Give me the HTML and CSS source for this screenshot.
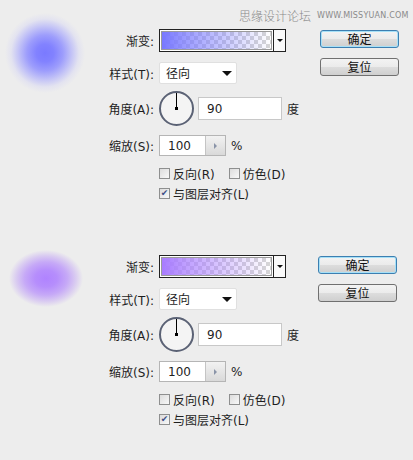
FILE: index.html
```html
<!DOCTYPE html>
<html lang="zh-CN">
<head>
    <meta charset="UTF-8">
    <meta name="viewport" content="width=device-width, initial-scale=1.0">
    <title>渐变叠加</title>
    <link rel="stylesheet" href="styles.css">
</head>
<body>

    <!-- 水印 -->
    <div class="watermark">
        <span class="wm-cn">思缘设计论坛</span>
        <span class="wm-en">WWW.MISSYUAN.COM</span>
    </div>

    <!-- 第一组：蓝色 -->
    <div class="panel">
        <div class="preview preview-blue"></div>
        <div class="form">
            <div class="row row-gradient">
                <span class="row-label">渐变:</span>
                <div class="gradient-bar">
                    <div class="gradient-swatch swatch-blue"></div>
                    <div class="gradient-drop"><span class="tri-small"></span></div>
                </div>
            </div>
            <div class="row row-style">
                <span class="row-label">样式(T):</span>
                <div class="select">径向<span class="tri"></span></div>
            </div>
            <div class="row row-angle">
                <span class="row-label">角度(A):</span>
                <div class="dial"><span class="dial-hand"></span><span class="dial-dot"></span></div>
                <div class="input input-angle">90</div>
                <span class="unit">度</span>
            </div>
            <div class="row row-scale">
                <span class="row-label">缩放(S):</span>
                <div class="input input-scale">100<span class="spin"><span class="tri-spin"></span></span></div>
                <span class="unit">%</span>
            </div>
            <div class="checks">
                <div class="check-line">
                    <span class="check"><span class="box"></span><span class="check-text">反向(R)</span></span>
                    <span class="check check-gap"><span class="box"></span><span class="check-text">仿色(D)</span></span>
                </div>
                <div class="check-line check-line-2">
                    <span class="check"><span class="box">&#10004;</span><span class="check-text">与图层对齐(L)</span></span>
                </div>
            </div>
        </div>
        <div class="buttons">
            <button class="btn btn-default">确定</button>
            <button class="btn">复位</button>
        </div>
    </div>

    <!-- 第二组：紫色 -->
    <div class="panel">
        <div class="preview preview-purple"></div>
        <div class="form">
            <div class="row row-gradient">
                <span class="row-label">渐变:</span>
                <div class="gradient-bar">
                    <div class="gradient-swatch swatch-purple"></div>
                    <div class="gradient-drop"><span class="tri-small"></span></div>
                </div>
            </div>
            <div class="row row-style">
                <span class="row-label">样式(T):</span>
                <div class="select">径向<span class="tri"></span></div>
            </div>
            <div class="row row-angle">
                <span class="row-label">角度(A):</span>
                <div class="dial"><span class="dial-hand"></span><span class="dial-dot"></span></div>
                <div class="input input-angle">90</div>
                <span class="unit">度</span>
            </div>
            <div class="row row-scale">
                <span class="row-label">缩放(S):</span>
                <div class="input input-scale">100<span class="spin"><span class="tri-spin"></span></span></div>
                <span class="unit">%</span>
            </div>
            <div class="checks">
                <div class="check-line">
                    <span class="check"><span class="box"></span><span class="check-text">反向(R)</span></span>
                    <span class="check check-gap"><span class="box"></span><span class="check-text">仿色(D)</span></span>
                </div>
                <div class="check-line check-line-2">
                    <span class="check"><span class="box">&#10004;</span><span class="check-text">与图层对齐(L)</span></span>
                </div>
            </div>
        </div>
        <div class="buttons buttons-2">
            <button class="btn btn-default">确定</button>
            <button class="btn">复位</button>
        </div>
    </div>

</body>
</html>
```

FILE: styles.css
```css
body {
    margin: 0;
    position: relative;
    background: #ededed;
    color: #1e1e1e;
    font-family: "DejaVu Sans", "Noto Sans CJK SC", sans-serif;
    font-size: 12px;
}

/* 水印 */
.watermark {
    position: absolute;
    top: 7px;
    left: 239px;
    display: flex;
    align-items: center;
    color: #8a8a8a;
}

.wm-cn {
    font-family: "Noto Sans CJK SC", sans-serif;
    font-size: 12px;
    font-weight: 300;
}

.wm-en {
    margin-left: 6px;
    font-size: 8px;
    letter-spacing: 0.2px;
}

.panel {
    display: flex;
    align-items: flex-start;
    height: 226px;
}

/* 预览 */
.preview {
    flex-shrink: 0;
    width: 80px;
    height: 80px;
    margin: 13px 0 0 5px;
}

.preview-blue {
    background: radial-gradient(circle closest-side at 50% 50%, #7a7aff 0%, #8282ff 22%, #9d9dfc 45%, #c6c6f6 68%, #e3e3f0 85%, rgba(237, 237, 237, 0) 100%);
}

.preview-purple {
    width: 74px;
    height: 62px;
    margin: 19px 2px 0 9px;
    background: radial-gradient(closest-side at 50% 54%, #b083ff 0%, #b68efc 30%, #c6a9f7 58%, #d9cbf1 80%, rgba(237, 237, 237, 0) 100%);
}

/* 表单 */
.form {
    flex-shrink: 0;
    margin: 29px 0 0 15px;
    width: 200px;
}

.row {
    display: flex;
    align-items: center;
}

.row-label {
    width: 54px;
    margin-right: 5px;
    flex-shrink: 0;
    text-align: right;
    white-space: nowrap;
}

.row-style { margin-top: 10px; }
.row-angle { margin-top: 7px; }
.row-scale { margin-top: 9px; }

/* 复选框 */
.checks {
    margin: 10px 0 0 59px;
}

.check-line {
    display: flex;
    align-items: center;
    height: 14px;
}

.check-line-2 {
    margin-top: 6px;
}

.check {
    display: flex;
    align-items: center;
    flex-shrink: 0;
    white-space: nowrap;
}

.check-gap {
    margin-left: 14px;
}

.box {
    display: block;
    flex-shrink: 0;
    width: 9px;
    height: 9px;
    margin-right: 3px;
    border: 1px solid #8e8f8f;
    background: linear-gradient(135deg, #dcdcdc, #f8f8f8);
    font-size: 9px;
    line-height: 9px;
    text-align: center;
    color: #3d4f86;
    overflow: hidden;
}

/* 渐变条 */
.gradient-bar {
    display: flex;
    width: 125px;
    height: 21px;
    border: 1px solid #222;
    background: #fff;
}

.gradient-swatch {
    flex: 1;
    margin: 1px;
    border: 1px solid #9a9a9a;
    background-color: #fff;
    background-image:
        linear-gradient(45deg, #d6d6d6 25%, transparent 25%, transparent 75%, #d6d6d6 75%),
        linear-gradient(45deg, #d6d6d6 25%, transparent 25%, transparent 75%, #d6d6d6 75%);
    background-size: 8px 8px;
    background-position: 0 0, 4px 4px;
    position: relative;
}

.gradient-swatch::before {
    content: "";
    position: absolute;
    inset: 0;
}

.swatch-blue::before {
    background: linear-gradient(to right, #7878ff, rgba(120, 120, 255, 0.75) 20%, rgba(120, 120, 255, 0));
}

.swatch-purple::before {
    background: linear-gradient(to right, #a87cff, rgba(168, 124, 255, 0.75) 20%, rgba(168, 124, 255, 0));
}

.gradient-drop {
    width: 11px;
    border-left: 1px solid #222;
    display: flex;
    align-items: center;
    justify-content: center;
    background: #fafafa;
}

.tri-small {
    border-left: 3px solid transparent;
    border-right: 3px solid transparent;
    border-top: 3px solid #111;
}

/* 下拉 */
.select {
    position: relative;
    width: 70px;
    height: 20px;
    line-height: 20px;
    padding-left: 6px;
    border: 1px solid #e0e0e0;
    border-radius: 2px;
    background: #fff;
    font-family: "Noto Sans CJK SC", sans-serif;
}

.tri {
    position: absolute;
    right: 4px;
    top: 8px;
    border-left: 5px solid transparent;
    border-right: 5px solid transparent;
    border-top: 5px solid #111;
}

/* 角度 */
.dial {
    position: relative;
    width: 31px;
    height: 31px;
    border: 2px solid #5b6275;
    border-radius: 50%;
    background: #f4f4f4;
}

.dial-hand {
    position: absolute;
    left: 15px;
    top: 0;
    width: 1px;
    height: 16px;
    background: #000;
}

.dial-dot {
    position: absolute;
    left: 14px;
    top: 14px;
    width: 3px;
    height: 3px;
    background: #000;
}

.input {
    position: relative;
    height: 21px;
    line-height: 21px;
    padding-left: 8px;
    border: 1px solid #c8c8c8;
    background: #fff;
    box-sizing: border-box;
}

.input-angle {
    width: 84px;
    height: 23px;
    line-height: 22px;
    margin-left: 4px;
}

.input-scale {
    width: 67px;
    border-color: #b5b5b5;
}

.spin {
    position: absolute;
    right: 0;
    top: 0;
    bottom: 0;
    width: 19px;
    border-left: 1px solid #c4c4c4;
    background: linear-gradient(#f2f2f2, #d9d9d9);
    display: flex;
    align-items: center;
    justify-content: center;
}

.tri-spin {
    border-top: 3px solid transparent;
    border-bottom: 3px solid transparent;
    border-left: 3px solid #8a94a8;
}

.unit {
    margin-left: 5px;
}

/* 按钮 */
.buttons {
    display: flex;
    flex-direction: column;
    gap: 10px;
    margin: 30px 0 0 20px;
}

.buttons-2 {
    margin-left: 18px;
}

.btn {
    width: 79px;
    height: 18px;
    padding: 0;
    border: 1px solid #707070;
    border-radius: 3px;
    background: linear-gradient(#f3f3f3 0%, #ebebeb 50%, #dddddd 51%, #cfcfcf 100%);
    color: #111;
    font-family: "Noto Sans CJK SC", sans-serif;
    font-size: 12px;
    line-height: 16px;
}

.btn-default {
    border-color: #3c7fb1;
    box-shadow: inset 0 0 0 1px #a6e0f7;
}
```
